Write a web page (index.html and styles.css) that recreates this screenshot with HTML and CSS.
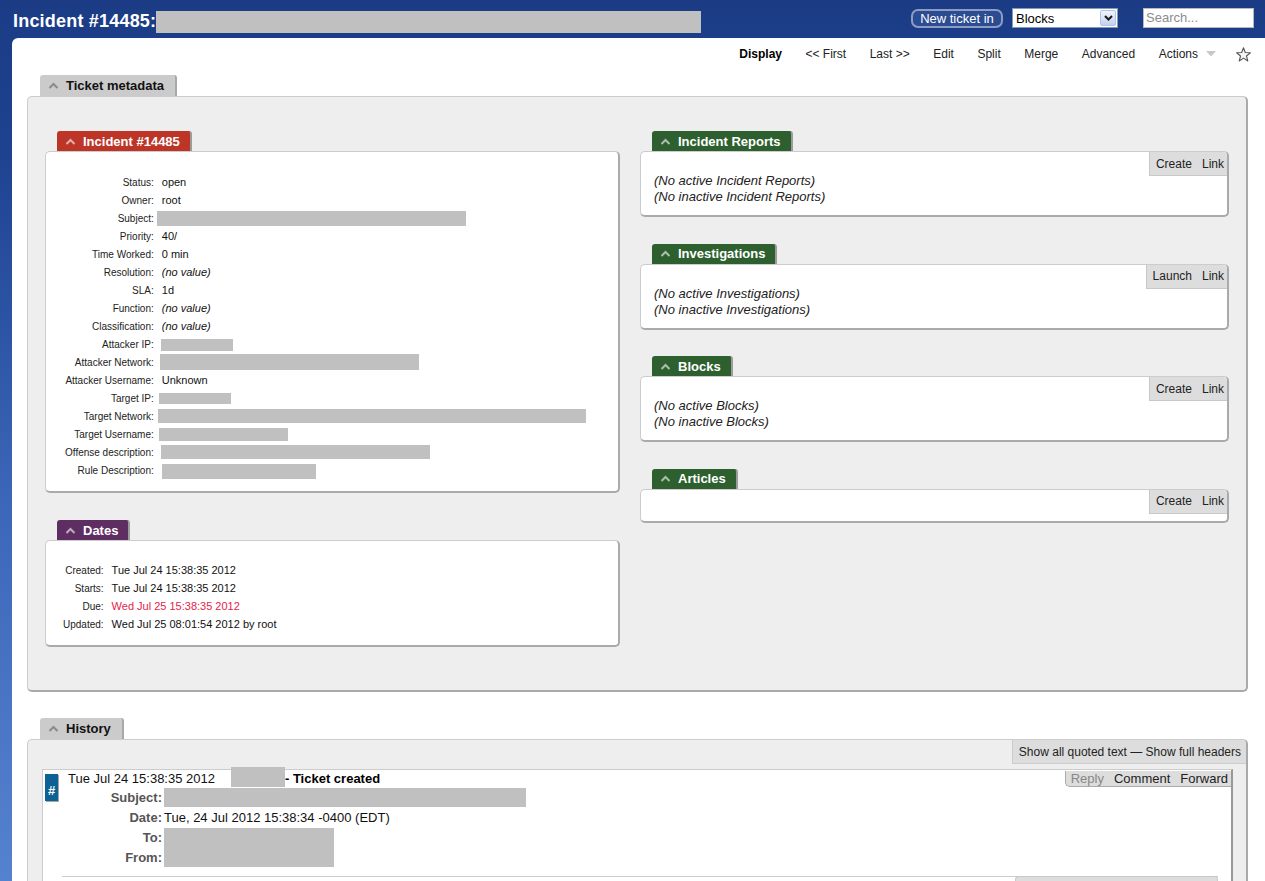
FILE: index.html
```html
<!DOCTYPE html>
<html lang="en">
<head>
<meta charset="utf-8">
<title>Incident #14485</title>
<link rel="stylesheet" href="styles.css">
</head>
<body>
<header class="topbar">
  <div class="ticket-title">
    <h1 class="ticket-title-text">Incident #14485:</h1>
    <span class="redact redact-title"></span>
  </div>
  <div class="topbar-tools">
    <button class="new-ticket" type="button">New ticket in</button>
    <div class="queue-select">
      <span class="queue-select-value">Blocks</span>
      <span class="queue-select-btn"><svg width="9" height="6" viewBox="0 0 9 6"><polyline points="1,1 4.5,4.5 8,1" fill="none" stroke="#1a1a1a" stroke-width="2"/></svg></span>
    </div>
    <div class="search-box">Search...</div>
  </div>
</header>

<div class="main">
  <nav class="page-menu">
    <a class="menu-item active">Display</a>
    <a class="menu-item">&lt;&lt; First</a>
    <a class="menu-item">Last &gt;&gt;</a>
    <a class="menu-item">Edit</a>
    <a class="menu-item">Split</a>
    <a class="menu-item">Merge</a>
    <a class="menu-item">Advanced</a>
    <a class="menu-item">Actions<svg class="menu-caret" width="10" height="6" viewBox="0 0 10 6"><polygon points="0,0 10,0 5,5.5" fill="#c8c8c8"/></svg></a>
    <svg class="menu-star" width="15" height="15" viewBox="0 0 14 14"><polygon points="7,0.7 8.7,5.15 13.47,5.4 9.76,8.4 11,13 7,10.4 3,13 4.24,8.4 0.53,5.4 5.3,5.15" fill="#f4f4f4" stroke="#555" stroke-width="1" stroke-linejoin="round"/></svg>
  </nav>

  <section class="titlebox section-box">
    <div class="tb-tab tab-gray"><svg class="chev" width="11" height="7" viewBox="0 0 11 7"><polyline points="1.5,6 5.5,2 9.5,6" fill="none" stroke="currentColor" stroke-width="2"/></svg>Ticket metadata</div>
    <div class="tb-body body-gray metadata-body">
      <div class="meta-col">
        <div class="titlebox inner-box">
          <div class="tb-tab tab-red"><svg class="chev" width="11" height="7" viewBox="0 0 11 7"><polyline points="1.5,6 5.5,2 9.5,6" fill="none" stroke="currentColor" stroke-width="2"/></svg>Incident #14485</div>
          <div class="tb-body body-white">
            <table class="fields incident-table">
              <tr><td class="lbl">Status:</td><td class="val">open</td></tr>
              <tr><td class="lbl">Owner:</td><td class="val">root</td></tr>
              <tr><td class="lbl">Subject:</td><td class="val"><span class="redact" style="width:309px;height:15px;margin-left:-5px"></span></td></tr>
              <tr><td class="lbl">Priority:</td><td class="val">40/</td></tr>
              <tr><td class="lbl">Time Worked:</td><td class="val">0 min</td></tr>
              <tr><td class="lbl">Resolution:</td><td class="val noval">(no value)</td></tr>
              <tr><td class="lbl">SLA:</td><td class="val">1d</td></tr>
              <tr><td class="lbl">Function:</td><td class="val noval">(no value)</td></tr>
              <tr><td class="lbl">Classification:</td><td class="val noval">(no value)</td></tr>
              <tr><td class="lbl">Attacker IP:</td><td class="val"><span class="redact" style="width:72px;height:12px;margin-left:-1px"></span></td></tr>
              <tr><td class="lbl">Attacker Network:</td><td class="val"><span class="redact" style="width:259px;height:16px;margin-left:-2px"></span></td></tr>
              <tr><td class="lbl">Attacker Username:</td><td class="val">Unknown</td></tr>
              <tr><td class="lbl">Target IP:</td><td class="val"><span class="redact" style="width:72px;height:11px;margin-left:-3px"></span></td></tr>
              <tr><td class="lbl">Target Network:</td><td class="val"><span class="redact" style="width:428px;height:14px;margin-left:-4px"></span></td></tr>
              <tr><td class="lbl">Target Username:</td><td class="val"><span class="redact" style="width:129px;height:13px;margin-left:-3px"></span></td></tr>
              <tr><td class="lbl">Offense description:</td><td class="val"><span class="redact" style="width:269px;height:14px;margin-left:-1px"></span></td></tr>
              <tr><td class="lbl">Rule Description:</td><td class="val"><span class="redact" style="width:154px;height:15px;margin-top:3px"></span></td></tr>
            </table>
          </div>
        </div>

        <div class="titlebox inner-box">
          <div class="tb-tab tab-purple"><svg class="chev" width="11" height="7" viewBox="0 0 11 7"><polyline points="1.5,6 5.5,2 9.5,6" fill="none" stroke="currentColor" stroke-width="2"/></svg>Dates</div>
          <div class="tb-body body-white">
            <table class="fields dates-table">
              <tr><td class="lbl">Created:</td><td class="val">Tue Jul 24 15:38:35 2012</td></tr>
              <tr><td class="lbl">Starts:</td><td class="val">Tue Jul 24 15:38:35 2012</td></tr>
              <tr><td class="lbl">Due:</td><td class="val due">Wed Jul 25 15:38:35 2012</td></tr>
              <tr><td class="lbl">Updated:</td><td class="val">Wed Jul 25 08:01:54 2012 by root</td></tr>
            </table>
          </div>
        </div>
      </div>

      <div class="meta-col meta-col-right">
        <div class="titlebox inner-box">
          <div class="tb-tab tab-green"><svg class="chev" width="11" height="7" viewBox="0 0 11 7"><polyline points="1.5,6 5.5,2 9.5,6" fill="none" stroke="currentColor" stroke-width="2"/></svg>Incident Reports</div>
          <div class="tb-body body-white linked-body">
            <div class="box-actions"><a>Create</a><a>Link</a></div>
            <div>(No active Incident Reports)</div>
            <div>(No inactive Incident Reports)</div>
          </div>
        </div>
        <div class="titlebox inner-box">
          <div class="tb-tab tab-green"><svg class="chev" width="11" height="7" viewBox="0 0 11 7"><polyline points="1.5,6 5.5,2 9.5,6" fill="none" stroke="currentColor" stroke-width="2"/></svg>Investigations</div>
          <div class="tb-body body-white linked-body">
            <div class="box-actions"><a>Launch</a><a>Link</a></div>
            <div>(No active Investigations)</div>
            <div>(No inactive Investigations)</div>
          </div>
        </div>
        <div class="titlebox inner-box">
          <div class="tb-tab tab-green"><svg class="chev" width="11" height="7" viewBox="0 0 11 7"><polyline points="1.5,6 5.5,2 9.5,6" fill="none" stroke="currentColor" stroke-width="2"/></svg>Blocks</div>
          <div class="tb-body body-white linked-body">
            <div class="box-actions"><a>Create</a><a>Link</a></div>
            <div>(No active Blocks)</div>
            <div>(No inactive Blocks)</div>
          </div>
        </div>
        <div class="titlebox inner-box">
          <div class="tb-tab tab-green"><svg class="chev" width="11" height="7" viewBox="0 0 11 7"><polyline points="1.5,6 5.5,2 9.5,6" fill="none" stroke="currentColor" stroke-width="2"/></svg>Articles</div>
          <div class="tb-body body-white linked-body">
            <div class="box-actions"><a>Create</a><a>Link</a></div>
          </div>
        </div>
      </div>
    </div>
  </section>

  <section class="titlebox section-box section-history">
    <div class="tb-tab tab-gray"><svg class="chev" width="11" height="7" viewBox="0 0 11 7"><polyline points="1.5,6 5.5,2 9.5,6" fill="none" stroke="currentColor" stroke-width="2"/></svg>History</div>
    <div class="tb-body body-gray history-body">
      <div class="history-tools">
        <div class="history-tools-pill"><a>Show all quoted text</a>&nbsp;—&nbsp;<a>Show full headers</a></div>
      </div>
      <div class="txn">
        <div class="txn-actions"><a class="disabled">Reply</a><a>Comment</a><a>Forward</a></div>
        <div class="txn-row">
          <div class="txn-badge">#</div>
          <div class="txn-main">
            <div class="txn-head">
              <span class="txn-date">Tue Jul 24 15:38:35 2012</span>
              <span class="redact txn-who"></span>
              <span class="txn-desc">- Ticket created</span>
            </div>
            <div class="txn-headers">
              <div class="hdr-lbl">Subject:</div>
              <div class="hdr-val"><span class="redact" style="width:362px;height:19px"></span></div>
              <div class="hdr-lbl">Date:</div>
              <div class="hdr-val">Tue, 24 Jul 2012 15:38:34 -0400 (EDT)</div>
              <div class="hdr-lbl hdr-to">To:</div>
              <div class="hdr-lbl hdr-from">From:</div>
              <div class="hdr-val hdr-tofrom"><span class="redact" style="width:170px;height:39px"></span></div>
            </div>
          </div>
        </div>
        <div class="txn-msg">
          <div class="txn-msg-pill"></div>
        </div>
      </div>
    </div>
  </section>
</div>
</body>
</html>
```

FILE: styles.css
```css
* { box-sizing: border-box; }

html, body {
  height: 100%;
  overflow: hidden;
}

body {
  margin: 0;
  font-family: "Liberation Sans", Arial, sans-serif;
  color: #000;
  background: linear-gradient(to bottom, #1b3c85 0px, #1e4290 150px, #3c66b8 500px, #5582cf 881px);
}

a { color: inherit; text-decoration: none; }

/* ---------- top bar ---------- */
.topbar {
  height: 38px;
  display: flex;
  justify-content: space-between;
  padding: 8px 11px 0 13px;
}

.ticket-title {
  display: flex;
  align-items: flex-start;
  padding-top: 3px;
}

.ticket-title-text {
  margin: -1px 0 0;
  font-size: 18px;
  font-weight: bold;
  line-height: 22px;
  letter-spacing: 0.2px;
  color: #fff;
}

.redact {
  display: inline-block;
  background: #c0c0c0;
  vertical-align: middle;
}

.redact-title { width: 545px; height: 22px; }

.topbar-tools {
  display: flex;
  align-items: flex-start;
}

.new-ticket {
  width: 92px;
  height: 19px;
  margin-top: 1px;
  padding: 0;
  border: 2px solid #8d9dc2;
  border-radius: 7px;
  background: #2b4b93;
  color: #fff;
  font: 13px "Liberation Sans", Arial, sans-serif;
  line-height: 15px;
}

.queue-select {
  display: flex;
  align-items: center;
  justify-content: space-between;
  width: 106px;
  height: 20px;
  margin-left: 9px;
  padding: 0 1px 0 3px;
  background: #fff;
  border: 1px solid #7f9db9;
  font-size: 13px;
}

.queue-select-btn {
  width: 16px;
  height: 16px;
  display: flex;
  align-items: center;
  justify-content: center;
  border: 1px solid #b4c3e6;
  border-radius: 2px;
  background: linear-gradient(#f1f4fd, #c3d1f1);
}

.search-box {
  width: 111px;
  height: 20px;
  margin-left: 25px;
  padding: 0 2px;
  border: 1px solid #b9b9b9;
  background: #fff;
  color: #8c8c8c;
  font-size: 13px;
  line-height: 18px;
}

/* ---------- main area ---------- */
.main {
  margin-left: 12px;
  height: calc(100% - 38px);
  background: #fff;
  border-top-left-radius: 6px;
  overflow: hidden;
}

.page-menu {
  display: flex;
  justify-content: flex-end;
  align-items: center;
  gap: 23.5px;
  height: 30px;
  padding: 2px 14px 0 0;
  font-size: 12px;
}

.menu-item {
  display: flex;
  align-items: center;
  color: #222;
}

.menu-item.active {
  color: #000;
  font-weight: bold;
}

.menu-caret { margin-left: 8px; }
.menu-star { margin-left: -3.5px; }

/* ---------- title boxes ---------- */
.titlebox {
  display: flex;
  flex-direction: column;
}

.section-box { margin: 7px 17px 0 15px; }
.section-history { margin-top: 26px; }

.tb-tab {
  align-self: flex-start;
  display: flex;
  align-items: center;
  height: 20px;
  padding: 0 10px 0 8px;
  border-radius: 3px 3px 0 0;
  border-right: 2px solid #9c9c9c;
  font-size: 13px;
  font-weight: bold;
  color: #fff;
}

.tb-tab .chev {
  margin-right: 7px;
  color: rgba(255, 255, 255, 0.6);
}

.tab-gray {
  height: 21px;
  margin-left: 13px;
  padding-right: 11px;
  background: #cbcbcb;
  color: #111;
  border-right-color: #a8a8a8;
}

.tab-gray .chev { color: #8a8a8a; }

.inner-box .tb-tab { margin-left: 12px; }

.tab-red { background: #bd3527; }
.tab-purple { background: #5e2e63; }
.tab-green { background: #2d5f2f; }

.tb-body {
  border: 1px solid #cccccc;
  border-right: 2px solid #aaaaaa;
  border-bottom: 2px solid #aaaaaa;
  border-radius: 5px;
}

.body-gray { background: #eeeeee; }
.body-white { background: #ffffff; }

.metadata-body {
  display: grid;
  grid-template-columns: 575fr 589fr;
  column-gap: 20px;
  align-items: start;
  padding: 34px 17px 43px 17px;
}

.inner-box + .inner-box { margin-top: 27px; }
.meta-col-right .inner-box + .inner-box { margin-top: 26.6px; }

/* ---------- field tables ---------- */
.fields {
  border-collapse: collapse;
}

.incident-table { margin: 21px 0 12px 19px; }
.dates-table { margin: 20px 0 12px 17px; }

.fields td {
  height: 18px;
  padding: 0;
  vertical-align: middle;
}

.fields .lbl {
  padding-right: 8px;
  text-align: right;
  font-size: 10px;
  color: #222;
  white-space: nowrap;
}

.fields .val {
  font-size: 11px;
  color: #111;
  white-space: nowrap;
}

.noval { font-style: italic; }

.fields .due { color: #e5234b; }

/* ---------- linked record boxes ---------- */
.linked-body {
  position: relative;
  padding: 21px 13px 10px;
  font-size: 13px;
  font-style: italic;
  line-height: 16px;
  color: #222;
}

.box-actions {
  position: absolute;
  top: 0;
  right: 0;
  height: 24px;
  display: flex;
  align-items: center;
  gap: 10px;
  padding: 0 3px 0 6px;
  background: #dddddd;
  border-left: 1px solid #c8c8c8;
  border-bottom: 1px solid #c8c8c8;
  border-top-right-radius: 4px;
  font-size: 12px;
  font-style: normal;
  color: #222;
}

/* ---------- history ---------- */
.history-body {
  height: 400px;
}

.history-tools {
  display: flex;
  justify-content: flex-end;
}

.history-tools-pill {
  height: 24px;
  display: flex;
  align-items: center;
  padding: 0 5px 0 6px;
  background: #dddddd;
  border-left: 1px solid #cccccc;
  border-bottom: 1px solid #cccccc;
  border-top-right-radius: 4px;
  font-size: 12px;
  color: #222;
}

.txn {
  position: relative;
  height: 300px;
  margin: 5px 13px 0 14px;
  background: #fff;
  border-top: 1px solid #cccccc;
  border-left: 1px solid #cccccc;
  border-right: 2px solid #999999;
}

.txn-actions {
  position: absolute;
  top: 1px;
  right: 0;
  height: 16px;
  display: flex;
  align-items: center;
  gap: 10px;
  padding: 0 3px 0 5px;
  background: #dddddd;
  border-left: 1px solid #aaaaaa;
  border-bottom: 1px solid #aaaaaa;
  border-bottom-left-radius: 5px;
  font-size: 13px;
  color: #222;
}

.txn-actions .disabled { color: #888; }

.txn-row {
  display: flex;
  align-items: flex-start;
}

.txn-badge {
  width: 13px;
  height: 27px;
  margin: 4px 0 0 2px;
  padding-top: 9px;
  background: #0d6295;
  box-shadow: 1px 1px 0 rgba(0, 0, 0, 0.35);
  color: #fff;
  font-size: 13px;
  font-weight: bold;
  line-height: 16px;
  text-align: center;
}

.txn-main {
  flex: 1;
  margin-left: 10px;
}

.txn-head {
  display: flex;
  align-items: flex-end;
  height: 20px;
  margin-top: -3px;
  font-size: 13px;
  line-height: 16px;
  color: #111;
}

.txn-who {
  width: 54px;
  height: 20px;
  margin-left: 16px;
}

.txn-desc {
  font-weight: bold;
  color: #000;
}

.txn-headers {
  display: grid;
  grid-template-columns: 94px auto;
  grid-auto-rows: 20px;
  column-gap: 2px;
  align-items: center;
  justify-items: start;
  font-size: 13px;
}

.hdr-lbl {
  justify-self: end;
  font-weight: bold;
  color: #555;
}

.hdr-val { color: #111; display: flex; }

.hdr-to { grid-column: 1; grid-row: 3; }
.hdr-from { grid-column: 1; grid-row: 4; }
.hdr-tofrom { grid-column: 2; grid-row: 3 / span 2; }

.txn-msg {
  display: flex;
  justify-content: flex-end;
  margin: 9px 13px 0 19px;
  border-top: 1px solid #cccccc;
}

.txn-msg-pill {
  width: 203px;
  height: 22px;
  margin-top: -1px;
  background: #dddddd;
  border: 1px solid #c8c8c8;
  border-bottom: none;
  border-radius: 4px 4px 0 0;
}
```
